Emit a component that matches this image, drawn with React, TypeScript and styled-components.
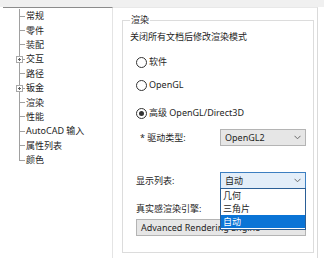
import React from "react";
import styled, { createGlobalStyle } from "styled-components";

const GlobalStyle = createGlobalStyle`
  html, body {
    margin: 0;
    padding: 0;
    background: #ffffff;
  }
  body {
    font-family: "Noto Sans", "Noto Sans CJK SC", sans-serif;
    font-size: 9px;
    color: #1e1e1e;
  }
`;

const Window = styled.div`
  width: 324px;
  height: 258px;
  display: flex;
  flex-direction: column;
  background: #ffffff;
  overflow: hidden;
`;

const TopStrip = styled.div`
  height: 7px;
  background: #f0f0f0;
  flex-shrink: 0;
`;

const Body = styled.div`
  flex: 1;
  display: flex;
`;

const TreePanel = styled.div`
  box-sizing: border-box;
  flex-shrink: 0;
  width: 110px;
  margin-left: 3px;
  border-top: 1px solid #8c8c8c;
  border-right: 1px solid #e4e4e4;
  padding: 1px 0 0 12px;
`;

const TreeRow = styled.div<{ $last?: boolean }>`
  height: 14.4px;
  display: flex;
  align-items: center;
  position: relative;
  white-space: nowrap;

  &::before {
    content: "";
    position: absolute;
    left: 4px;
    top: 0;
    height: ${({ $last }) => ($last ? "50%" : "100%")};
    border-left: 1px solid #a0a0a0;
  }
`;

const Branch = styled.span`
  width: 6px;
  height: 1px;
  margin-left: 4px;
  background: #a0a0a0;
  flex-shrink: 0;
`;

const Expander = styled.span`
  position: absolute;
  left: 1px;
  top: 50%;
  width: 5px;
  height: 5px;
  margin-top: -3px;
  border: 1px solid #a8a8a8;
  background: #ffffff;
  z-index: 1;

  &::before,
  &::after {
    content: "";
    position: absolute;
    background: #606060;
  }
  &::before {
    left: 1px;
    right: 1px;
    top: 2px;
    height: 1px;
  }
  &::after {
    top: 1px;
    bottom: 1px;
    left: 2px;
    width: 1px;
  }
`;

const TreeLabel = styled.span`
  margin-left: 1px;
  line-height: 12px;
`;

const RightPanel = styled.div`
  flex: 1;
  min-width: 0;
  border-top: 1px solid #e8e8e8;
  border-right: 1px solid #dadada;
  margin-right: 6px;
  padding: 6px 3px 0 9px;
`;

const GroupBox = styled.fieldset`
  margin: 0;
  padding: 0 7px 16px 7px;
  border: 1px solid #dcdcdc;
  min-width: 0;
  position: relative;
`;

const GroupTitle = styled.legend`
  padding: 0 1px;
  margin-left: 0;
  line-height: 12px;
`;

const Line = styled.div<{ $top: number; $indent?: number }>`
  margin-top: ${({ $top }) => $top}px;
  margin-left: ${({ $indent }) => $indent ?? 0}px;
  line-height: 12px;
  height: 12px;
  display: flex;
  align-items: center;
  white-space: nowrap;
`;

const Radio = styled.span<{ $checked?: boolean }>`
  width: 9px;
  height: 9px;
  border: 1px solid #333333;
  border-radius: 50%;
  margin-right: 2px;
  position: relative;
  flex-shrink: 0;

  &::after {
    content: "";
    display: ${({ $checked }) => ($checked ? "block" : "none")};
    position: absolute;
    left: 2px;
    top: 2px;
    width: 5px;
    height: 5px;
    border-radius: 50%;
    background: #333333;
  }
`;

const FieldRow = styled.div<{ $top: number }>`
  margin-top: ${({ $top }) => $top}px;
  margin-left: 6px;
  display: flex;
  align-items: center;
  position: relative;
`;

const FieldLabel = styled.span<{ $indent?: number }>`
  width: ${({ $indent }) => 84 - ($indent ?? 0)}px;
  padding-left: ${({ $indent }) => $indent ?? 0}px;
  white-space: nowrap;
`;

const Combo = styled.div<{ $focus?: boolean; $wide?: boolean }>`
  width: ${({ $wide }) => ($wide ? 170 : 86)}px;
  height: 17px;
  box-sizing: border-box;
  display: flex;
  align-items: center;
  padding: 0 4px 0 4px;
  border: 1px solid ${({ $focus }) => ($focus ? "#3c7fc1" : "#b4b4b4")};
  background: ${({ $focus }) => ($focus ? "#e3eef9" : "#e6e6e6")};
  white-space: nowrap;
`;

const ComboText = styled.span`
  flex: 1;
`;

const DropList = styled.div`
  position: absolute;
  left: 84px;
  top: 16px;
  width: 86px;
  box-sizing: border-box;
  border: 1px solid #2b5f96;
  background: #ffffff;
  z-index: 2;
  padding-bottom: 1px;
`;

const DropItem = styled.div<{ $selected?: boolean }>`
  height: 13px;
  line-height: 13px;
  padding-left: 2px;
  background: ${({ $selected }) => ($selected ? "#0a74d6" : "transparent")};
  color: ${({ $selected }) => ($selected ? "#ffffff" : "#1e1e1e")};
`;

const Chevron = () => (
  <svg width="7" height="5" viewBox="0 0 7 5">
    <path d="M0.5 0.8 L3.5 3.8 L6.5 0.8" fill="none" stroke="#6a6a6a" strokeWidth="1" />
  </svg>
);

const treeItems: { label: string; expandable?: boolean }[] = [
  { label: "常规" },
  { label: "零件" },
  { label: "装配" },
  { label: "交互", expandable: true },
  { label: "路径" },
  { label: "钣金", expandable: true },
  { label: "渲染" },
  { label: "性能" },
  { label: "AutoCAD 输入" },
  { label: "属性列表" },
  { label: "颜色" },
];

export default function App() {
  return (
    <Window>
      <GlobalStyle />
      <TopStrip />
      <Body>
        <TreePanel>
          {treeItems.map((item, i) => (
            <TreeRow key={item.label} $last={i === treeItems.length - 1}>
              {item.expandable && <Expander />}
              <Branch />
              <TreeLabel>{item.label}</TreeLabel>
            </TreeRow>
          ))}
        </TreePanel>
        <RightPanel>
          <GroupBox>
            <GroupTitle>渲染</GroupTitle>
            <Line $top={5}>关闭所有文档后修改渲染模式</Line>
            <Line $top={13} $indent={6}>
              <Radio />
              软件
            </Line>
            <Line $top={11} $indent={6}>
              <Radio />
              OpenGL
            </Line>
            <Line $top={16} $indent={6}>
              <Radio $checked />
              高级 OpenGL/Direct3D
            </Line>
            <FieldRow $top={10}>
              <FieldLabel $indent={4}>* 驱动类型:</FieldLabel>
              <Combo>
                <ComboText>OpenGL2</ComboText>
                <Chevron />
              </Combo>
            </FieldRow>
            <FieldRow $top={26}>
              <FieldLabel>显示列表:</FieldLabel>
              <Combo $focus>
                <ComboText>自动</ComboText>
                <Chevron />
              </Combo>
              <DropList>
                <DropItem>几何</DropItem>
                <DropItem>三角片</DropItem>
                <DropItem $selected>自动</DropItem>
              </DropList>
            </FieldRow>
            <Line $top={14} $indent={6}>真实感渲染引擎:</Line>
            <FieldRow $top={4}>
              <Combo $wide>
                <ComboText>Advanced Rendering Engine</ComboText>
                <Chevron />
              </Combo>
            </FieldRow>
          </GroupBox>
        </RightPanel>
      </Body>
    </Window>
  );
}
